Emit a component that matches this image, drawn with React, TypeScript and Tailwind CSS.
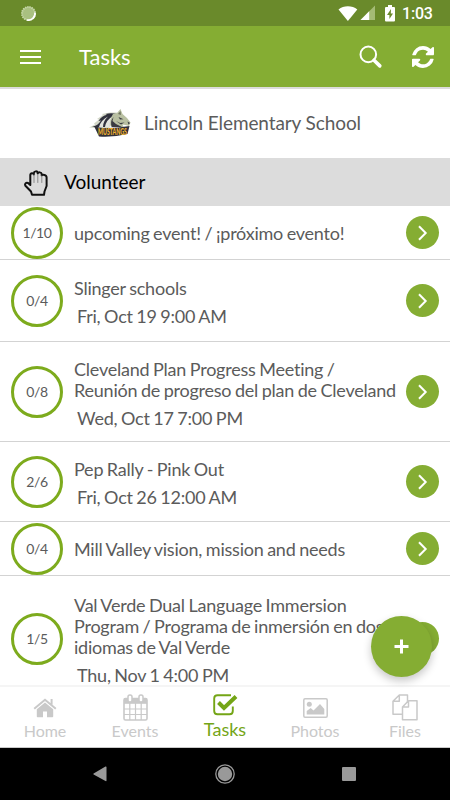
import { ReactNode } from 'react';

interface Task {
  count: string;
  title: string;
  date?: string;
  height: string;
}

const tasks: Task[] = [
  { count: '1/10', title: 'upcoming event! / ¡próximo evento!', height: 'h-[54px]' },
  { count: '0/4', title: 'Slinger schools', date: 'Fri, Oct 19 9:00 AM', height: 'h-[82px]' },
  {
    count: '0/8',
    title: 'Cleveland Plan Progress Meeting / Reunión de progreso del plan de Cleveland',
    date: 'Wed, Oct 17 7:00 PM',
    height: 'h-[100px]',
  },
  { count: '2/6', title: 'Pep Rally - Pink Out', date: 'Fri, Oct 26 12:00 AM', height: 'h-[80px]' },
  { count: '0/4', title: 'Mill Valley vision, mission and needs', height: 'h-[54px]' },
  {
    count: '1/5',
    title: 'Val Verde Dual Language Immersion Program / Programa de inmersión en dos idiomas de Val Verde',
    date: 'Thu, Nov 1 4:00 PM',
    height: 'h-[126px]',
  },
];

function StatusBar() {
  return (
    <div className="flex h-[26px] shrink-0 items-center bg-[#6a8a2b] pl-5 pr-[17px] text-white">
      <svg width="17" height="17" viewBox="0 0 17 17" fill="none">
        <circle cx="8.5" cy="8.5" r="7" fill="#a9c080" />
        <circle cx="8.5" cy="8.5" r="6.5" stroke="#c6d6a9" strokeWidth="2" strokeDasharray="1.2 1" />
        <path d="M15 7.5A6.7 6.7 0 0 1 7 15" stroke="#fff" strokeWidth="1.7" />
      </svg>
      <svg className="ml-auto" width="20" height="17" viewBox="0 0 20 17">
        <path d="M.5 4.6C5.6.2 14.2.2 19.3 4.6L9.9 16Z" fill="#fff" />
      </svg>
      <svg className="ml-[2px]" width="16" height="16" viewBox="0 0 16 16">
        <path d="M15 .5V15H.5Z" fill="#a4bb76" />
        <path d="M9.2 6.3V15H.5Z" fill="#fff" />
      </svg>
      <svg className="ml-[9px]" width="10" height="17" viewBox="0 0 10 17">
        <path d="M3 0h4v2h2q1 0 1 1v12.5q0 1-1 1H1q-1 0-1-1V3q0-1 1-1h2z" fill="#fff" />
        <path d="M6 4 2 10h2.4v4L8 8.4H5.8z" fill="#6a8a2b" />
      </svg>
      <span className="ml-[7px] w-[31px] pt-[2px] font-[Roboto] text-[16px] font-medium leading-none tracking-[-0.2px]">1:03</span>
    </div>
  );
}

function Header() {
  return (
    <header className="flex h-[61px] shrink-0 items-center bg-[#85ad33] pl-5 pr-[15px] text-white">
      <div className="flex w-[21px] flex-col gap-1">
        <span className="h-[2px] bg-white" />
        <span className="h-[2px] bg-white" />
        <span className="h-[2px] bg-white" />
      </div>
      <h1 className="ml-[38px] text-[22px] leading-none">Tasks</h1>
      <svg className="ml-auto" width="24" height="24" viewBox="0 0 24 24" fill="none" stroke="#fff">
        <circle cx="9.3" cy="9.4" r="7.8" strokeWidth="2" />
        <path d="M15 15.2 20.8 20.9" strokeWidth="3.6" strokeLinecap="round" />
      </svg>
      <svg className="ml-[29px] mr-[1px]" width="22" height="22" viewBox="0 0 1536 1536" fill="#fff">
        <path d="M1511 928q0 5-1 7-64 268-268 434.500T764 1536q-146 0-282.500-55T238 1324l-129 129q-19 19-45 19t-45-19-19-45V960q0-26 19-45t45-19h448q26 0 45 19t19 45-19 45l-137 137q71 66 161 102t187 36q134 0 250-65t186-179q11-17 53-117 8-23 30-23h192q13 0 22.500 9.500t9.500 22.500zm25-800v448q0 26-19 45t-45 19h-448q-26 0-45-19t-19-45 19-45l138-138Q969 256 768 256q-134 0-250 65T332 500q-11 17-53 117-8 23-30 23H50q-13 0-22.500-9.500T18 608v-7q65-268 270-434.500T768 0q146 0 284 55.500T1297 212l130-129q19-19 45-19t45 19 19 45z" />
      </svg>
    </header>
  );
}

function MustangLogo() {
  return (
    <svg className="overflow-visible" width="43" height="29" viewBox="0 0 43 29">
      {/* mane */}
      <path d="M0 18.500 6 15.500 5 14.500 10 10.500 8 10 14 6 13 5 21 3.500 28 3.500 24 12 20 19H6Z" fill="#d3d7c8" />
      <path d="M3 18Q9 16.500 12 11.500L9.500 12Q13 6.500 18 5.800L16.500 5Q22 3.500 28 5Q20 8 18 18H7Z" fill="#30313d" />
      <path d="M10 18Q12 11 19 7.500Q14 12 14 18ZM16 18Q17 11 24 7Q20 12 20.500 18Z" fill="#e2e4de" />
      {/* head */}
      <path d="M24 5 28 4 31.500 0 33.500 5 38 9 41.500 13.500 40 17 36.500 16 33.500 15.500 34.500 18H22Q20 11 24 5Z" fill="#b9c0a2" />
      <path d="M24.500 8 23.500 12 27 15 33 18H23Q20.500 13 24.500 8ZM29.500 8 34.500 10.200 31 10.500ZM27 12 31 14 35.500 13.500 32 15.500ZM38.500 12.500l2.500 1.500-1.500 1.500Z" fill="#3a3b42" />
      <path d="M29 5 31.500 2 32 6Z" fill="#70755f" />
      {/* banner */}
      <path d="M5 17 10 18.500Q23 20 40.500 17L38.500 25Q24 28.500 10 27.500Z" fill="#30303a" />
      <text
        x="9"
        y="25.800"
        textLength="29"
        lengthAdjust="spacingAndGlyphs"
        className="fill-[#f0b32c] font-[Lato] text-[8.500px] font-black"
      >
        MUSTANGS
      </text>
    </svg>
  );
}

function HandIcon() {
  return (
    <svg width="24" height="26" viewBox="0 0 24 26" fill="none" stroke="#111" strokeLinejoin="round" strokeLinecap="round">
      <path
        d="M8 24.800 7 21.500 1.400 15.800C.4 14 2 12 4 13L6.300 15V5.200C6.300 2.600 9.600 2.600 9.800 4.500V3.400C10 .8 13.400.8 13.700 2.800V3.600C14.200 1.800 17.500 2 17.700 4V5.500C18.500 4.300 22.500 4.500 22.600 7.500V16L20.500 21.500 20 24.800Z"
        strokeWidth="2"
      />
      <path d="M10 5V12.500M13.800 4.500V12.500M17.800 6V12.500" stroke="#8a8a8a" strokeWidth="1" />
    </svg>
  );
}

function TaskRow({ task }: { task: Task }) {
  return (
    <li className={`flex shrink-0 items-center border-b border-[#d3d3d3] pl-[11px] pr-[11px] ${task.height}`}>
      <div className="flex size-[52px] shrink-0 items-center justify-center rounded-full border-[3px] border-[#7dab1d] text-[14px] tracking-[-0.4px] text-[#5b5b5b]">
        {task.count}
      </div>
      <div
        className={`ml-[11px] w-[325px] shrink-0 text-[18px] tracking-[-0.22px] text-[#5b5b5b] [word-spacing:-0.8px] ${task.date ? '' : 'pt-[1px]'}`}
      >
        <p className="leading-[21px]">{task.title}</p>
        {task.date && <p className="ml-[3px] mt-[11px] leading-[13px]">{task.date}</p>}
      </div>
      <div className="ml-auto flex size-[33px] shrink-0 items-center justify-center rounded-full bg-[#85ad33]">
        <svg width="10" height="16" viewBox="0 0 10 16" fill="none" stroke="#fff" strokeWidth="2">
          <path d="M1 1.200 7.700 8 1 14.800" />
        </svg>
      </div>
    </li>
  );
}

function Tab({ label, active, children }: { label: string; active?: boolean; children: ReactNode }) {
  return (
    <div className={`flex flex-1 flex-col items-center ${active ? 'text-[#74a516]' : 'text-[#c9c9c9]'}`}>
      <div className="flex h-[34px] items-center justify-center">{children}</div>
      <span className={active ? '-mt-[3px] text-[18px] leading-[22px]' : 'text-[16px] leading-[20px]'}>{label}</span>
    </div>
  );
}

function TabBar() {
  return (
    <nav className="flex h-[63px] shrink-0 border-b border-t-2 border-b-[#c9c9c9] border-t-[#f5f5f5] bg-white">
      <Tab label="Home">
        <svg className="mt-[7px]" width="24" height="20" viewBox="0 0 24 20" fill="currentColor">
          <path d="M12 4.400 20.200 11.200V18.500q0 .8-.8.8H14V13.500H10V19.300H4.600q-.8 0-.8-.8V11.200Z" />
          <path d="M1.200 10.700 12 1.700 22.800 10.700M18.600 1V6.500" fill="none" stroke="currentColor" strokeWidth="2" />
        </svg>
      </Tab>
      <Tab label="Events">
        <svg className="mt-[7px]" width="25" height="27" viewBox="0 0 25 27" fill="none" stroke="currentColor">
          <rect x="1" y="4.500" width="23" height="21.500" rx="1.500" strokeWidth="1.600" />
          <path d="M1 4.500H24V9.800H1Z" fill="currentColor" stroke="none" />
          <path d="M1 15H24M1 20.500H24M6.800 9V26M12.500 9V26M18.200 9V26" strokeWidth="1.200" />
          <rect x="5" y="1" width="4" height="7" rx="1.800" fill="#fff" strokeWidth="1.500" />
          <rect x="16" y="1" width="4" height="7" rx="1.800" fill="#fff" strokeWidth="1.500" />
        </svg>
      </Tab>
      <Tab label="Tasks" active>
        <svg className="mt-[1px]" width="25" height="22" viewBox="0 0 25 22" fill="none" stroke="currentColor">
          <path d="M18 1.200H4.500Q1.200 1.200 1.200 4.500V17Q1.200 20.300 4.500 20.300H16.500Q19.800 20.300 19.800 17V12.500" strokeWidth="1.900" />
          <path d="M5.500 8.500 11 14 23 2.500" strokeWidth="4" />
        </svg>
      </Tab>
      <Tab label="Photos">
        <svg className="mt-[8px]" width="25" height="20" viewBox="0 0 25 20" fill="currentColor">
          <rect x=".8" y=".8" width="23.400" height="18.400" rx="1.200" fill="none" stroke="currentColor" strokeWidth="1.500" />
          <circle cx="6.300" cy="6.300" r="2.500" />
          <path d="M3.700 16.500V13L7.700 10 10.500 12.500 17 6 21.300 11V16.500Z" />
        </svg>
      </Tab>
      <Tab label="Files">
        <svg className="mt-[7px]" width="26" height="27" viewBox="0 0 26 27" fill="none" stroke="currentColor" strokeWidth="1.500" strokeLinejoin="round">
          <path d="M10.500 20.200H1V7.300L7.300 1H15.500V8M7.300 1V7.300H1" />
          <path d="M16.500 6.800H25V25.800H10.500V13ZM16.500 6.800V13H10.500" />
        </svg>
      </Tab>
    </nav>
  );
}

function SystemNav() {
  return (
    <div className="flex h-[52px] shrink-0 items-center justify-between bg-black pl-[93px] pr-[94px]">
      <svg width="14" height="16" viewBox="0 0 14 16" fill="#999">
        <path d="M.6 7.600 12.500.6q1-.4 1 .6V14.500q0 1-1 .5L.6 8.400q-.6-.4 0-.8Z" />
      </svg>
      <svg width="20" height="20" viewBox="0 0 20 20">
        <circle cx="10" cy="10" r="9.200" fill="none" stroke="#999" strokeWidth="1.300" />
        <circle cx="10" cy="10" r="7.200" fill="#999" />
      </svg>
      <span className="size-[14px] rounded-[1px] bg-[#999]" />
    </div>
  );
}

export default function App() {
  return (
    <div className="relative flex h-[800px] w-[450px] flex-col overflow-hidden bg-white font-[Lato,sans-serif]">
      <StatusBar />
      <Header />
      <div className="flex h-[71px] shrink-0 items-center justify-center border-t-2 border-[#dcdcdc]">
        <MustangLogo />
        <span className="ml-[12px] text-[19px] tracking-[-0.1px] text-[#5b5b5b]">Lincoln Elementary School</span>
      </div>
      <div className="flex h-[48px] shrink-0 items-center bg-[#dcdcdc] pl-6 pt-[2px]">
        <HandIcon />
        <h2 className="ml-4 pb-[2px] text-[19px] text-black">Volunteer</h2>
      </div>

      {/* Task list */}
      <ul className="flex min-h-0 flex-1 flex-col overflow-hidden">
        {tasks.map((task) => (
          <TaskRow key={task.title} task={task} />
        ))}
      </ul>

      <TabBar />
      <SystemNav />

      {/* Add button */}
      <button className="absolute left-[371px] top-[616px] flex size-[61px] items-center justify-center rounded-full bg-[#85ad33] shadow-[0_4px_8px_rgba(0,0,0,0.22)]">
        <svg width="15" height="15" viewBox="0 0 15 15" stroke="#fff" strokeWidth="3">
          <path d="M7.500.5V14.500M.5 7.500H14.500" />
        </svg>
      </button>
    </div>
  );
}
